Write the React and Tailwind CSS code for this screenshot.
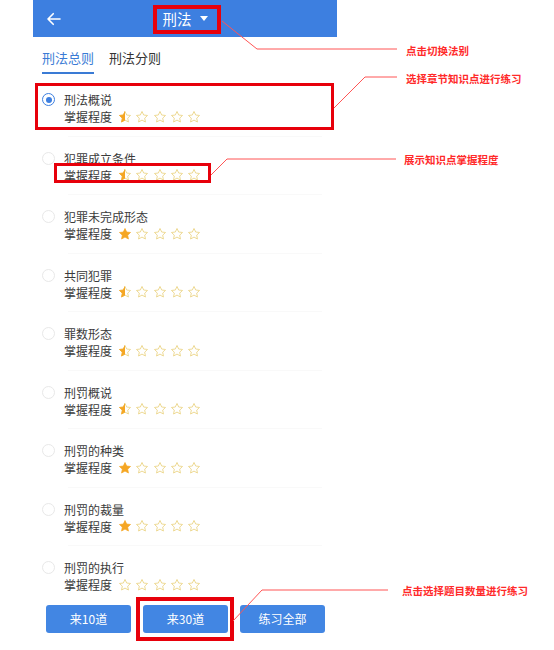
import React from "react"

const items = [
  { title: "刑法概说", stars: 0.5, selected: true },
  { title: "犯罪成立条件", stars: 0.5 },
  { title: "犯罪未完成形态", stars: 1 },
  { title: "共同犯罪", stars: 0.5 },
  { title: "罪数形态", stars: 0.5 },
  { title: "刑罚概说", stars: 0.5 },
  { title: "刑罚的种类", stars: 1 },
  { title: "刑罚的裁量", stars: 1 },
  { title: "刑罚的执行", stars: 0 },
]

const STAR = "M12 2.5l2.9 6.1 6.6.8-4.9 4.6 1.3 6.6L12 17.3l-5.9 3.3 1.3-6.6-4.9-4.6 6.6-.8z"

const Star = ({ fill }) => (
  <svg width="14" height="14" viewBox="0 0 24 24">
    {fill === 1 && <path d={STAR} fill="#f5a623" stroke="#f5a623" strokeWidth="1.2" strokeLinejoin="round" />}
    {fill === 0.5 && (
      <>
        <path d={STAR} fill="none" stroke="#ecd68c" strokeWidth="1.6" strokeLinejoin="round" />
        <clipPath id="halfStar">
          <rect x="0" y="0" width="12" height="24" />
        </clipPath>
        <path d={STAR} fill="#f5a623" stroke="#f5a623" strokeWidth="1.2" strokeLinejoin="round" clipPath="url(#halfStar)" />
      </>
    )}
    {fill === 0 && <path d={STAR} fill="none" stroke="#ecd68c" strokeWidth="1.6" strokeLinejoin="round" />}
  </svg>
)

const Stars = ({ value }) => (
  <div className="flex items-center gap-[3.3px] ml-[6px]">
    {[0, 1, 2, 3, 4].map((i) => (
      <Star key={i} fill={i === 0 ? value : 0} />
    ))}
  </div>
)

const Radio = ({ on }) =>
  on ? (
    <div className="w-[13px] h-[13px] rounded-full border-[1.5px] border-[#3d7fe0] flex items-center justify-center">
      <div className="w-[6px] h-[6px] rounded-full bg-[#3d7fe0]" />
    </div>
  ) : (
    <div className="w-[13px] h-[13px] rounded-full border-[1.5px] border-[#e8e8e8]" />
  )

const Item = ({ item }) => (
  <div className="h-[58.5px] flex flex-col pt-2">
    <div className="flex pl-[9px]">
      <div className="h-[17px] flex items-center">
        <Radio on={item.selected} />
      </div>
      <div className="ml-[9px]">
        <div className="h-[17px] leading-[17px] text-[12px] text-[#3a3a3a]">{item.title}</div>
        <div className="h-[17px] flex items-center">
          <span className="text-[12px] leading-[17px] text-[#3a3a3a]">掌握程度</span>
          <Stars value={item.stars} />
        </div>
      </div>
    </div>
    <div className="mt-auto mb-[5px] ml-[35px] mr-[15px] h-px bg-[#f9f9f9]" />
  </div>
)

const Box = ({ className }) => <div className={`absolute border-red-600 ${className}`} />

const Label = ({ className, children }) => (
  <div className={`absolute text-[10.5px] leading-[12px] font-bold text-[#ff2a2a] whitespace-nowrap ${className}`}>{children}</div>
)

export default function App() {
  return (
    <div
      className="relative w-[554px] h-[650px] bg-white overflow-hidden"
      style={{ fontFamily: '"Noto Sans CJK SC", "Noto Sans", sans-serif' }}
    >
      <div className="ml-[33px] w-[304px] flex flex-col">
        <div className="h-[37px] bg-[#3d7fe0] flex items-center relative">
          <svg className="absolute left-[12px]" width="18" height="18" viewBox="0 0 24 24" fill="none" stroke="white" strokeWidth="2.2" strokeLinecap="round" strokeLinejoin="round">
            <path d="M20 12H4M11 5l-7 7 7 7" />
          </svg>
          <div className="mx-auto flex items-center text-white text-[14.5px]">
            <span>刑法</span>
            <svg className="ml-[8px]" width="8" height="6" viewBox="0 0 8 6">
              <path d="M0 0h8L4 5z" fill="white" />
            </svg>
          </div>
        </div>

        <div className="h-[46px] flex items-start pt-[13px] pl-[9px] gap-[15px] text-[13px]">
          <div className="flex flex-col">
            <span className="text-[#3a7bd5] leading-[16px]">刑法总则</span>
            <div className="mt-[6px] h-[2px] bg-[#3a7bd5]" />
          </div>
          <span className="text-[#333] leading-[16px]">刑法分则</span>
        </div>

        <div className="h-[514px] overflow-hidden">
          {items.map((it) => (
            <Item key={it.title} item={it} />
          ))}
        </div>

        <div className="pt-2 pl-[13px] flex gap-[12px]">
          {["来10道", "来30道", "练习全部"].map((t) => (
            <div key={t} className="w-[85px] h-[28px] rounded-[3px] bg-[#4286e3] text-white text-[12px] flex items-center justify-center">
              {t}
            </div>
          ))}
        </div>
      </div>

      <Box className="left-[153px] top-[5px] w-[68px] h-[29px] border-4" />
      <Box className="left-[35px] top-[83px] w-[299px] h-[47px] border-[3.5px]" />
      <Box className="left-[54px] top-[163px] w-[157px] h-[20px] border-[3px]" />
      <Box className="left-[136px] top-[597px] w-[98px] h-[44px] border-4" />

      <svg className="absolute left-0 top-0" width="554" height="650" fill="none" stroke="#f55" strokeWidth="1">
        <polyline points="222,21 257,49 397,49" />
        <polyline points="334,108 365,77 397,77" />
        <polyline points="211,175 227,159 396,159" />
        <polyline points="233,621 262,590 388,590" />
      </svg>

      <Label className="left-[406px] top-[45px]">点击切换法别</Label>
      <Label className="left-[406px] top-[73px]">选择章节知识点进行练习</Label>
      <Label className="left-[404px] top-[154px]">展示知识点掌握程度</Label>
      <Label className="left-[402px] top-[585px]">点击选择题目数量进行练习</Label>
    </div>
  )
}
